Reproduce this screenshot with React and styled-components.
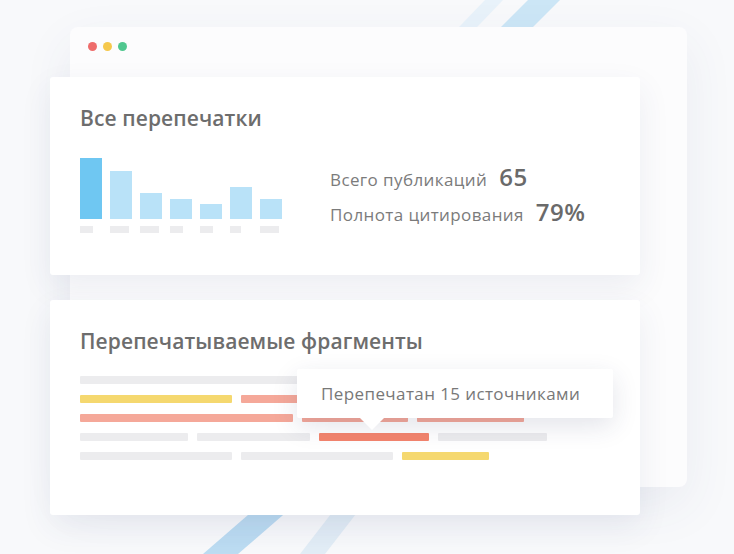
import React from 'react';
import styled, { createGlobalStyle } from 'styled-components';

const GlobalStyle = createGlobalStyle`
  html, body {
    margin: 0;
    padding: 0;
    background: #f8f9fb;
  }
  body {
    font-family: "Open Sans", "Noto Sans", sans-serif;
  }
`;

const Stage = styled.div`
  position: relative;
  width: 734px;
  height: 554px;
  overflow: hidden;
  box-sizing: border-box;
  padding: 27px 0 0 70px;
`;

const Decor = styled.svg`
  position: absolute;
  top: 0;
  left: 0;
  z-index: 0;
`;

const BrowserWindow = styled.div`
  position: relative;
  z-index: 1;
  width: 617px;
  height: 460px;
  box-sizing: border-box;
  background: #fcfcfd;
  border-radius: 8px;
  box-shadow: 0 18px 50px rgba(70, 80, 130, 0.08);
  padding-top: 15px;
  display: flex;
  flex-direction: column;
`;

const Dots = styled.div`
  display: flex;
  gap: 6px;
  margin-left: 18px;
`;

const Dot = styled.span`
  width: 9px;
  height: 9px;
  border-radius: 50%;
  background: ${(p) => p.color};
`;

const Cards = styled.div`
  display: flex;
  flex-direction: column;
  gap: 25px;
  width: 590px;
  margin: 26px 0 0 -20px;
`;

const Card = styled.section`
  height: ${(p) => p.h}px;
  box-sizing: border-box;
  background: #fff;
  border-radius: 3px;
  box-shadow: 0 12px 32px rgba(50, 60, 120, 0.08);
  padding: 29px 30px 0;
`;

const Title = styled.h2`
  margin: 0;
  font-size: 21px;
  line-height: 25px;
  font-weight: 600;
  letter-spacing: 0.1px;
  color: #6d6d6d;
`;

const Overview = styled.div`
  display: flex;
  align-items: center;
  margin-top: 27px;
`;

const Chart = styled.div`
  display: flex;
  flex-direction: column;
  gap: 7px;
`;

const BarRow = styled.div`
  display: flex;
  align-items: flex-end;
  gap: 8px;
  height: 61px;
`;

const Bar = styled.div`
  width: 22px;
  background: ${(p) => (p.active ? '#6fc7f2' : '#b9e2f8')};
`;

const LabelRow = styled.div`
  display: flex;
  gap: 8px;
`;

const LabelCell = styled.div`
  width: 22px;
`;

const Label = styled.div`
  height: 7px;
  background: #ececee;
`;

const Stats = styled.div`
  margin-left: 48px;
  display: flex;
  flex-direction: column;
`;

const Stat = styled.div`
  display: flex;
  align-items: baseline;
  gap: 12px;
  line-height: 32px;
`;

const StatLabel = styled.span`
  font-size: 17px;
  letter-spacing: 0.4px;
  color: #7b7b7b;
`;

const StatValue = styled.span`
  font-size: 24px;
  font-weight: 600;
  letter-spacing: 0.5px;
  color: #6a6a6a;
`;

const Lines = styled.div`
  position: relative;
  display: flex;
  flex-direction: column;
  gap: 11px;
  margin-top: 22px;
`;

const Row = styled.div`
  display: flex;
  gap: 9px;
`;

const Seg = styled.div`
  height: 8px;
  border-radius: 1px;
  background: ${(p) => p.color};
`;

const Tooltip = styled.div`
  position: absolute;
  left: 217px;
  top: -7px;
  width: 316px;
  height: 49px;
  box-sizing: border-box;
  padding-left: 24px;
  display: flex;
  align-items: center;
  background: #fff;
  border-radius: 2px;
  box-shadow: 0 8px 26px rgba(40, 50, 90, 0.13);
  font-size: 17px;
  letter-spacing: 0.4px;
  color: #787878;

  &::after {
    content: '';
    position: absolute;
    left: 63px;
    bottom: -12px;
    border-left: 12px solid transparent;
    border-right: 12px solid transparent;
    border-top: 12px solid #fff;
  }
`;

const bars = [
  { h: 61, label: 13, active: true },
  { h: 48, label: 19 },
  { h: 26, label: 19 },
  { h: 20, label: 13 },
  { h: 15, label: 13 },
  { h: 32, label: 11 },
  { h: 20, label: 19 },
];

const G = '#ececee';
const Y = '#f5d86f';
const S = '#f5a899';
const R = '#f4856d';

const rows = [
  [[465, G]],
  [[152, Y], [170, S]],
  [[213, S], [106, S], [107, S]],
  [[108, G], [113, G], [110, R], [109, G]],
  [[152, G], [152, G], [87, Y]],
];

export default function App() {
  return (
    <>
      <GlobalStyle />
      <Stage>
        <Decor width="734" height="554" viewBox="0 0 734 554">
          <polygon points="485,0 503,0 455,50 437,50" fill="#e8f2fa" />
          <polygon points="528,0 560,0 510,50 478,50" fill="#cce6f6" />
          <polygon points="300,470 335,470 238,554 203,554" fill="#bcdcf2" />
          <polygon points="365,470 390,470 325,554 300,554" fill="#e2edf6" />
        </Decor>
        <BrowserWindow>
          <Dots>
            <Dot color="#ee6c6b" />
            <Dot color="#f5c84c" />
            <Dot color="#50c78f" />
          </Dots>
          <Cards>
            <Card h={198}>
              <Title>Все перепечатки</Title>
              <Overview>
                <Chart>
                  <BarRow>
                    {bars.map((b, i) => (
                      <Bar key={i} active={b.active} style={{ height: b.h }} />
                    ))}
                  </BarRow>
                  <LabelRow>
                    {bars.map((b, i) => (
                      <LabelCell key={i}>
                        <Label style={{ width: b.label }} />
                      </LabelCell>
                    ))}
                  </LabelRow>
                </Chart>
                <Stats>
                  <Stat>
                    <StatLabel>Всего публикаций</StatLabel>
                    <StatValue>65</StatValue>
                  </Stat>
                  <Stat>
                    <StatLabel>Полнота цитирования</StatLabel>
                    <StatValue>79%</StatValue>
                  </Stat>
                </Stats>
              </Overview>
            </Card>
            <Card h={215}>
              <Title>Перепечатываемые фрагменты</Title>
              <Lines>
                {rows.map((segs, i) => (
                  <Row key={i}>
                    {segs.map(([w, c], j) => (
                      <Seg key={j} color={c} style={{ width: w }} />
                    ))}
                  </Row>
                ))}
                <Tooltip>Перепечатан 15 источниками</Tooltip>
              </Lines>
            </Card>
          </Cards>
        </BrowserWindow>
      </Stage>
    </>
  );
}
